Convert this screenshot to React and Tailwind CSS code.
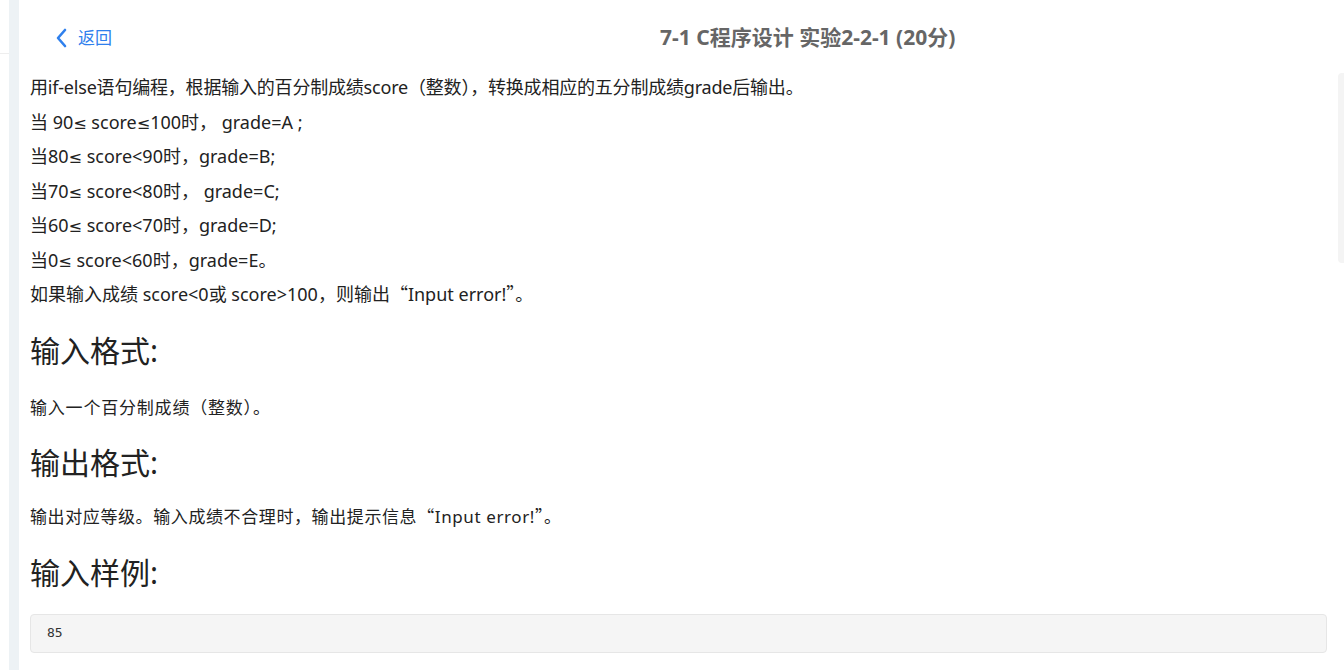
import React from "react";

const Q = ({ children }) => (
  <span className="font-['Noto_Sans_CJK_SC',sans-serif] leading-none">{children}</span>
);
const LE = () => <span className="font-['DejaVu_Sans',sans-serif] text-[16px] leading-none">≤</span>;

const Line = ({ children }) => <div className="h-[34.5px] leading-[34.5px] whitespace-pre overflow-visible">{children}</div>;

export default function App() {
  return (
    <div className="flex w-[1344px] h-[670px] overflow-hidden bg-white relative font-['Noto_Sans','Noto_Sans_CJK_SC',sans-serif]">
      <div className="w-[9px] shrink-0 flex flex-col">
        <div className="h-[53px]" />
        <div className="h-px bg-[#eeeeee]" />
      </div>
      <div className="w-[10px] shrink-0 bg-[#edf2f5]" />
      <div className="flex-1 flex flex-col pl-[11px] pr-[17px]">
        <div className="flex items-center h-[70px] shrink-0 pt-[6px]">
          <div className="flex items-center ml-[25px] text-[#2f80ed] text-[17px]">
            <svg width="13" height="20" viewBox="0 0 13 20" className="mr-[10px]">
              <path d="M10 2 L3 10 L10 18" fill="none" stroke="#2f80ed" strokeWidth="2.6" strokeLinecap="round" strokeLinejoin="round" />
            </svg>
            <span>返回</span>
          </div>
          <div className="ml-[548px] text-[21px] font-bold text-[#666666]">7-1 C程序设计 实验2-2-1 (20分)</div>
        </div>
        <div className="text-[18px] text-[#222222] shrink-0">
          <Line><span className="tracking-[-0.2px]">用if-else语句编程，根据输入的百分制成绩score（整数），转换成相应的五分制成绩grade后输出。</span></Line>
          <Line>当 90<LE /> score<LE />100时， grade=A ;</Line>
          <Line>当80<LE /> score&lt;90时，grade=B;</Line>
          <Line>当70<LE /> score&lt;80时， grade=C;</Line>
          <Line>当60<LE /> score&lt;70时，grade=D;</Line>
          <Line>当0<LE /> score&lt;60时，grade=E。</Line>
          <Line>如果输入成绩 score&lt;0或 score&gt;100，则输出<Q>“</Q>Input error!<Q>”</Q>。</Line>
        </div>
        <div className="mt-[19px] text-[30px] leading-[40px] text-[#222222] shrink-0">输入格式:</div>
        <div className="mt-[25px] text-[17px] leading-[24px] tracking-[0.8px] text-[#222222] shrink-0">输入一个百分制成绩（整数）。</div>
        <div className="mt-[23px] text-[30px] leading-[40px] text-[#222222] shrink-0">输出格式:</div>
        <div className="mt-[22px] h-[24px] text-[17px] leading-[24px] tracking-[0.6px] text-[#222222] shrink-0 whitespace-pre">输出对应等级。输入成绩不合理时，输出提示信息<Q>“</Q>Input error!<Q>”</Q>。</div>
        <div className="mt-[24px] text-[30px] leading-[40px] text-[#222222] shrink-0">输入样例:</div>
        <div className="mt-[21px] h-[39px] shrink-0 border border-[#e6e6e6] bg-[#f5f5f5] rounded-[4px] flex items-center pl-[16px] text-[13px] text-[#333333] font-['DejaVu_Sans_Mono',monospace]">85</div>
      </div>
      <div className="absolute right-0 top-[73px] w-[6px] h-[190px] bg-[#f4f4f4] rounded-l-[4px]" />
    </div>
  );
}
